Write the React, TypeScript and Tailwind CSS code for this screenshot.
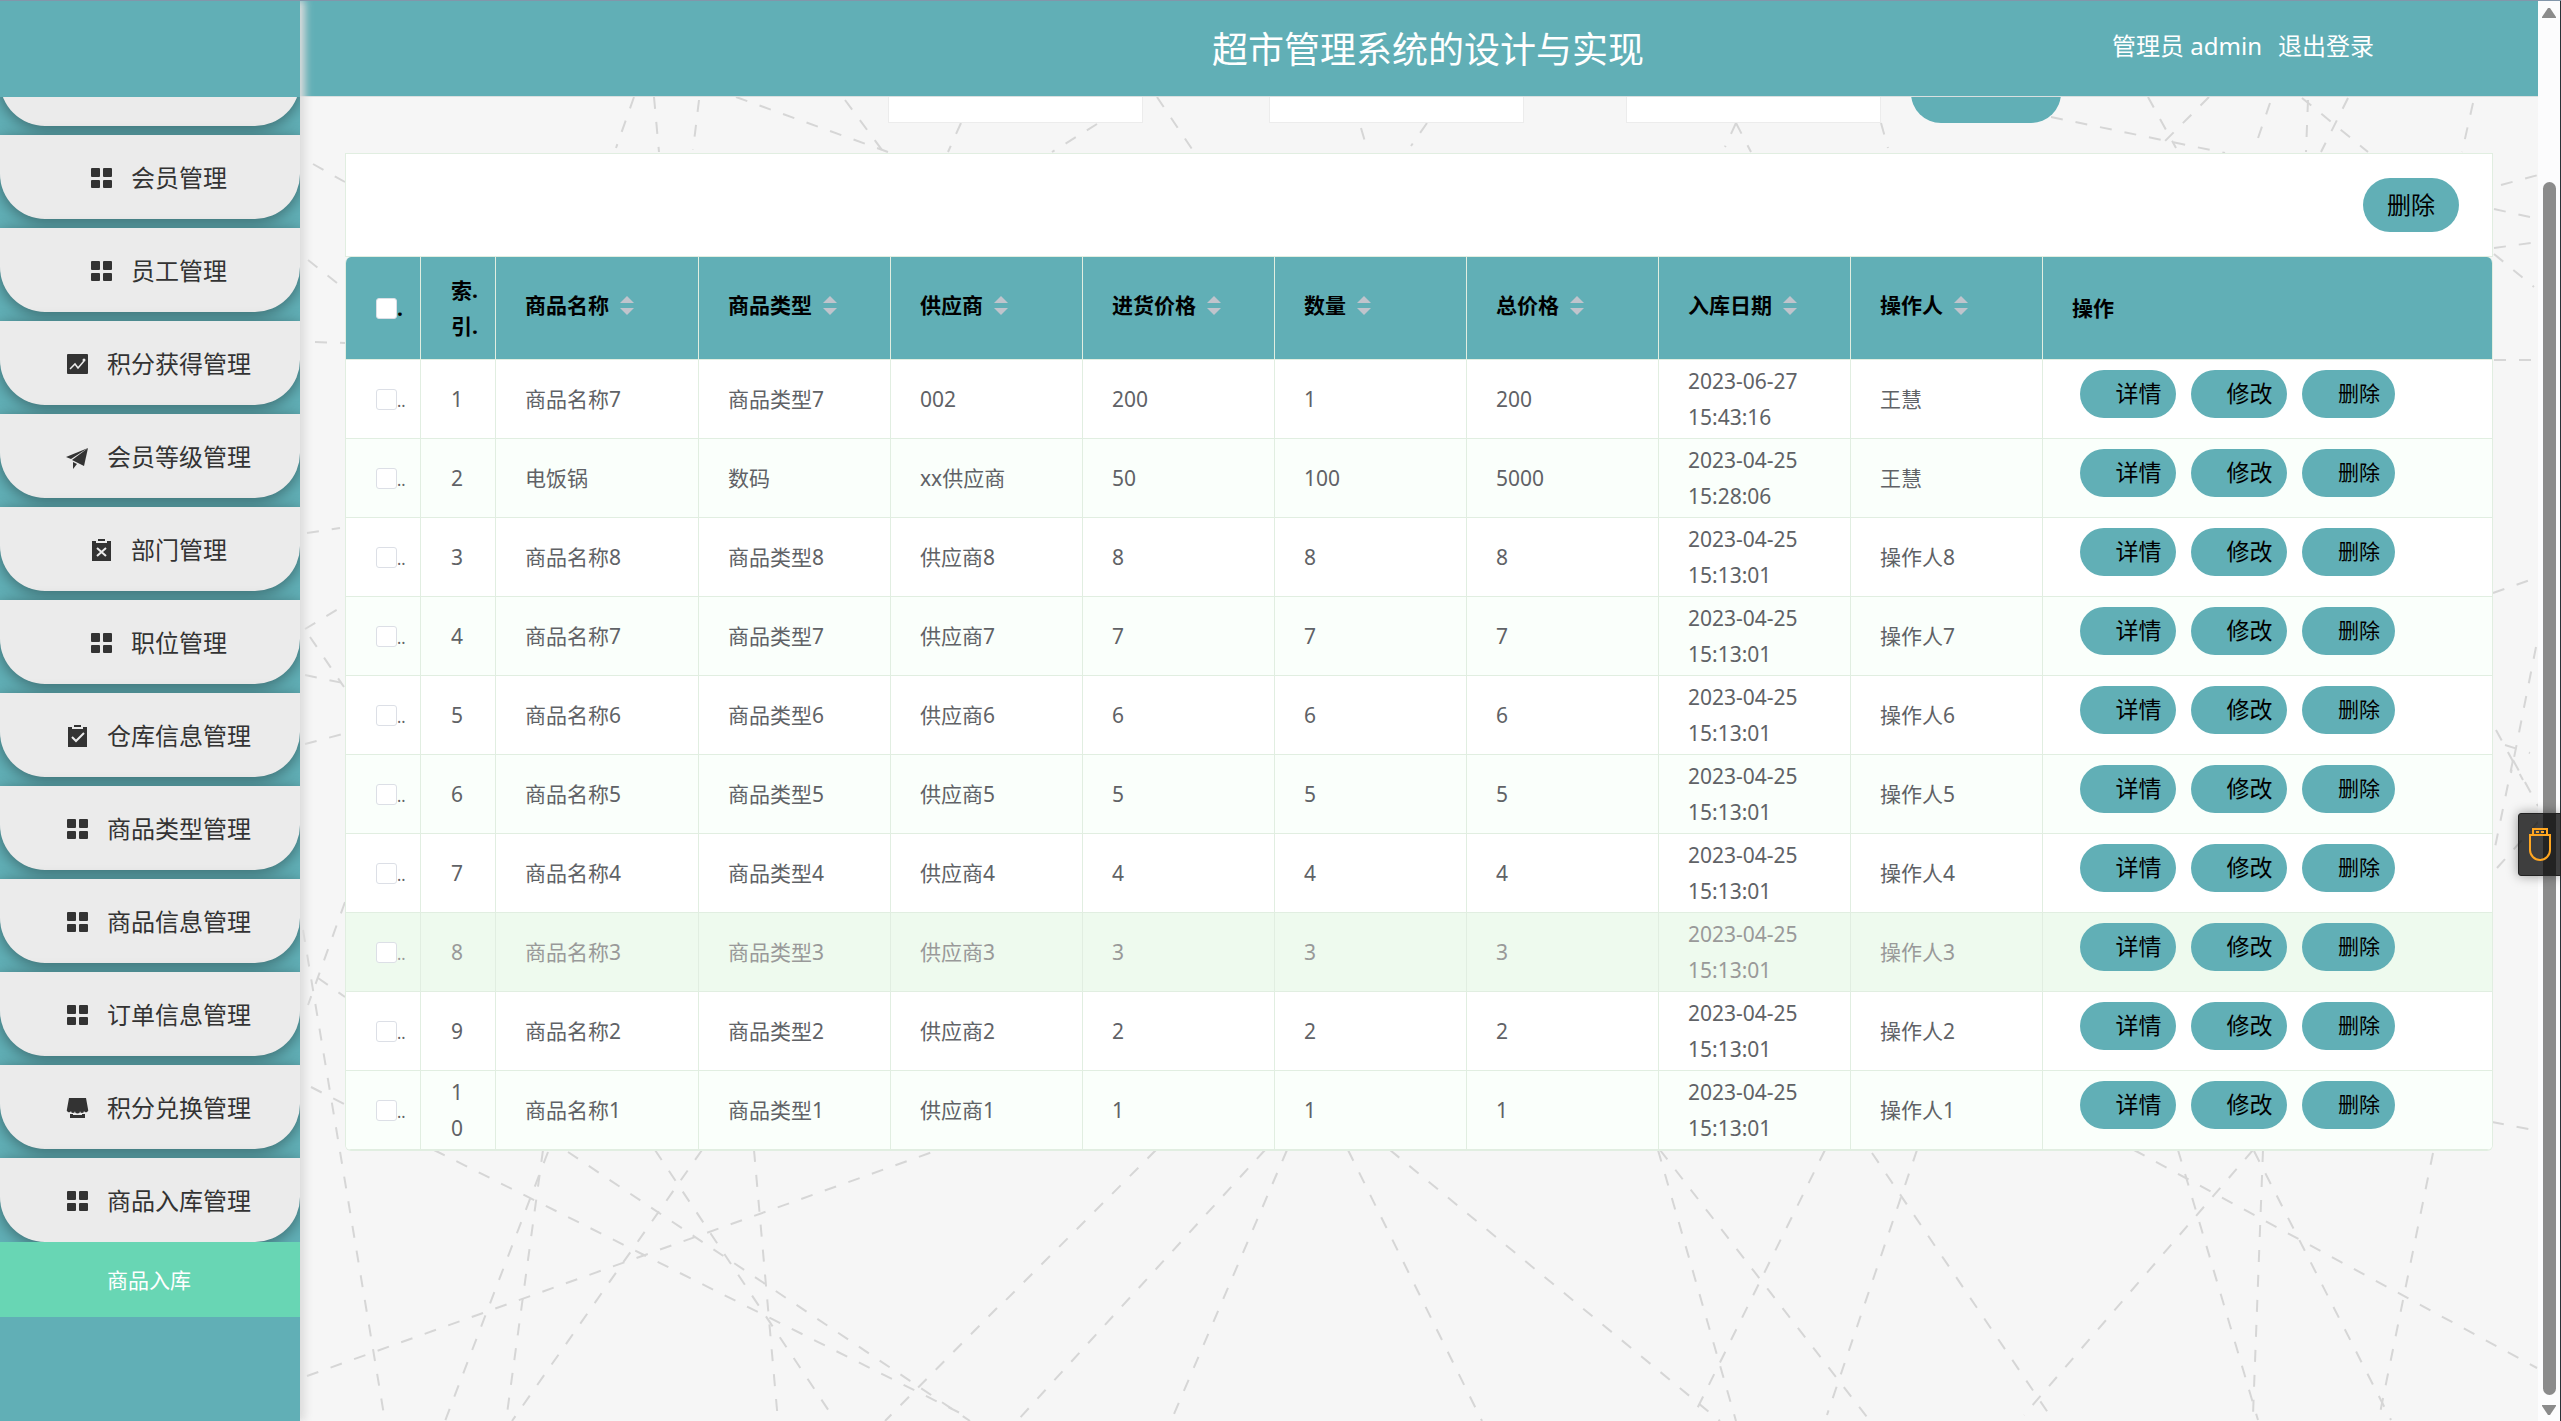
import type { ReactNode } from 'react'

const MENU = [
  { label: '会员管理', icon: 'grid' },
  { label: '员工管理', icon: 'grid' },
  { label: '积分获得管理', icon: 'chart' },
  { label: '会员等级管理', icon: 'plane' },
  { label: '部门管理', icon: 'release' },
  { label: '职位管理', icon: 'grid' },
  { label: '仓库信息管理', icon: 'claim' },
  { label: '商品类型管理', icon: 'grid' },
  { label: '商品信息管理', icon: 'grid' },
  { label: '订单信息管理', icon: 'grid' },
  { label: '积分兑换管理', icon: 'shop' },
  { label: '商品入库管理', icon: 'grid' },
]

const COLUMNS = ['商品名称', '商品类型', '供应商', '进货价格', '数量', '总价格', '入库日期', '操作人']

const ROWS = [
  ['商品名称7', '商品类型7', '002', '200', '1', '200', '2023-06-27 15:43:16', '王慧'],
  ['电饭锅', '数码', 'xx供应商', '50', '100', '5000', '2023-04-25 15:28:06', '王慧'],
  ['商品名称8', '商品类型8', '供应商8', '8', '8', '8', '2023-04-25 15:13:01', '操作人8'],
  ['商品名称7', '商品类型7', '供应商7', '7', '7', '7', '2023-04-25 15:13:01', '操作人7'],
  ['商品名称6', '商品类型6', '供应商6', '6', '6', '6', '2023-04-25 15:13:01', '操作人6'],
  ['商品名称5', '商品类型5', '供应商5', '5', '5', '5', '2023-04-25 15:13:01', '操作人5'],
  ['商品名称4', '商品类型4', '供应商4', '4', '4', '4', '2023-04-25 15:13:01', '操作人4'],
  ['商品名称3', '商品类型3', '供应商3', '3', '3', '3', '2023-04-25 15:13:01', '操作人3'],
  ['商品名称2', '商品类型2', '供应商2', '2', '2', '2', '2023-04-25 15:13:01', '操作人2'],
  ['商品名称1', '商品类型1', '供应商1', '1', '1', '1', '2023-04-25 15:13:01', '操作人1'],
]

const ACTIVE_ROW = 7

// x1, y1, x2, y2 of every dashed line in the backdrop
const LINES = [
  [634, 97, 616, 148], [654, 97, 659, 152], [699, 100, 693, 150], [736, 97, 888, 152],
  [845, 100, 882, 150], [961, 123, 948, 152], [1097, 124, 1052, 152], [1157, 97, 1192, 149],
  [1361, 128, 1368, 152], [1427, 123, 1411, 146], [1736, 123, 1725, 147], [1736, 123, 1751, 152],
  [1881, 123, 1888, 148], [2051, 117, 2225, 153], [2148, 97, 2176, 148], [2209, 97, 2158, 148],
  [2270, 103, 2255, 147], [2302, 98, 2368, 152], [2308, 100, 2306, 152], [2348, 98, 2321, 152],
  [2473, 103, 2462, 152], [2501, 185, 2538, 175], [2494, 209, 2530, 217], [2494, 248, 2538, 242],
  [2494, 254, 2534, 287], [2494, 360, 2538, 360], [2493, 593, 2530, 580], [2536, 647, 2511, 773],
  [2496, 730, 2523, 780], [2505, 745, 2530, 753], [2513, 760, 2493, 857], [2513, 760, 2538, 806],
  [2497, 868, 2538, 822], [2492, 1122, 2534, 1130],
  [313, 164, 345, 182], [308, 260, 342, 287], [315, 342, 345, 343], [307, 533, 340, 528],
  [305, 629, 343, 606], [310, 637, 344, 687], [305, 675, 343, 683], [305, 744, 343, 734],
  [345, 902, 308, 1005], [318, 978, 345, 997], [311, 1087, 346, 1105],
  [303, 930, 385, 1421], [434, 1150, 970, 1418], [307, 1376, 938, 1150], [548, 1152, 445, 1421],
  [543, 1150, 506, 1421], [702, 1150, 512, 1421], [568, 1152, 970, 1421], [655, 1150, 833, 1417],
  [754, 1150, 778, 1421], [1156, 1150, 1004, 1302], [997, 1308, 885, 1421], [1265, 1150, 1017, 1421],
  [1287, 1150, 1171, 1421], [1348, 1150, 1482, 1421], [1390, 1150, 1720, 1421], [1658, 1150, 1736, 1421],
  [1660, 1150, 1867, 1417], [1825, 1150, 1694, 1415], [1917, 1150, 1827, 1415], [1872, 1153, 2053, 1420],
  [2134, 1150, 2537, 1368], [2178, 1150, 2258, 1420], [2253, 1150, 2024, 1415], [2254, 1151, 2391, 1420],
  [2263, 1150, 2253, 1415], [2433, 1153, 2380, 1413],
]

const ICONS: Record<string, ReactNode> = {
  grid: (
    <>
      <rect x="2" y="2" width="9" height="9" rx="1" />
      <rect x="14" y="2" width="9" height="9" rx="1" />
      <rect x="2" y="14" width="9" height="8" rx="1" />
      <rect x="14" y="14" width="9" height="8" rx="1" />
    </>
  ),
  chart: (
    <>
      <rect x="2" y="2" width="21" height="20" rx="1" />
      <path d="M5 17l5-5 3 4 6-7" fill="none" stroke="#ebebeb" strokeWidth="1.5" />
      <circle cx="19" cy="8" r="1.5" fill="#ebebeb" />
    </>
  ),
  plane: (
    <>
      <path d="M1 12L23 3 6 14z" />
      <path d="M23 3L7 15l12 6z" />
      <path d="M8 17l4 2-4 5z" />
    </>
  ),
  release: (
    <>
      <path d="M3 3h4v2h11V3h4v20H3z" />
      <path d="M9 1h7v2H9z" />
      <path d="M8 10l9 8M17 10l-9 8" fill="none" stroke="#ebebeb" strokeWidth="2" />
    </>
  ),
  claim: (
    <>
      <path d="M3 3h4v2h11V3h4v20H3z" />
      <path d="M9 1h7v2H9z" />
      <path d="M7 13l4 4 8-8" fill="none" stroke="#ebebeb" strokeWidth="2" />
    </>
  ),
  shop: (
    <>
      <path d="M4 2h17l2 11a2 2 0 0 1-4 2 2 2 0 0 1-4 0 2 2 0 0 1-5 0 2 2 0 0 1-4 0 2 2 0 0 1-4-2z" />
      <path d="M5 18h3v1h9v-1h3v4H5z" />
    </>
  ),
}

function MenuButton({ label, icon }: { label: string; icon: string }) {
  return (
    <button
      type="button"
      className="flex h-[84px] w-full shrink-0 items-center justify-center rounded-b-[45px] bg-[#ebebeb] pt-0.5 pr-0.5 text-2xl text-[#333] shadow-[0_3px_15px_rgba(0,0,0,0.4)]"
    >
      <span className="flex w-[60px] justify-center">
        <svg className="size-[25px]" viewBox="0 0 25 25" fill="currentColor">{ICONS[icon]}</svg>
      </span>
      {label}
    </button>
  )
}

function Sidebar() {
  return (
    <aside className="z-20 flex w-[300px] shrink-0 flex-col bg-[#61afb6] shadow-[5px_0_8px_#dcdcdc]">
      <nav className="mt-[97px] overflow-hidden">
        <ul className="flex flex-col gap-[9px]">
          {/* scrolled almost out of view */}
          <li className="flex h-[29px] items-end">
            <button
              type="button"
              aria-label="首页"
              className="h-[84px] w-full shrink-0 rounded-b-[45px] bg-[#ebebeb] shadow-[0_3px_15px_rgba(0,0,0,0.4)]"
            />
          </li>
          {MENU.map(item => (
            <li key={item.label}>
              <MenuButton label={item.label} icon={item.icon} />
            </li>
          ))}
        </ul>
        <a href="#stock" className="relative flex h-[75px] items-center bg-[#68d6b4] pt-0.5 pl-[107px] text-[21px] text-white">
          商品入库
        </a>
      </nav>
    </aside>
  )
}

function Header() {
  return (
    <header className="grid h-[97px] grid-cols-[1fr_auto_1fr] items-center border-b border-[#d9e0e0] bg-[#61afb6] pt-1 text-white">
      <span />
      <h1 className="pl-[18px] text-4xl">超市管理系统的设计与实现</h1>
      <div className="flex justify-end gap-4 pr-[164px] pb-2 text-2xl">
        <span>管理员 admin</span>
        <a href="#logout">退出登录</a>
      </div>
    </header>
  )
}

function SearchForm() {
  return (
    <form className="flex h-[26px] items-end overflow-hidden pl-[588px]">
      <input aria-label="商品名称" className="mr-[126px] h-[54px] w-[255px] shrink-0 border border-[#ececec] bg-white" />
      <input aria-label="商品类型" className="mr-[102px] h-[54px] w-[255px] shrink-0 border border-[#ececec] bg-white" />
      <input aria-label="供应商" className="mr-[30px] h-[54px] w-[255px] shrink-0 border border-[#ececec] bg-white" />
      <button type="button" aria-label="查询" className="h-[60px] w-[150px] shrink-0 rounded-[30px] bg-[#61afb6]" />
    </form>
  )
}

function SortCarets() {
  return (
    <svg className="ml-[11px] h-[19px] w-[14px]" viewBox="0 0 14 19" fill="#c0c4cc">
      <path d="M7 0l7 7H0z" />
      <path d="M0 12h14l-7 7z" />
    </svg>
  )
}

function Tick({ label, dots }: { label: string; dots: string }) {
  return (
    <div className="flex items-center">
      <input
        type="checkbox"
        aria-label={label}
        className="size-[21px] shrink-0 appearance-none rounded-[3px] border border-[#dcdfe6] bg-white"
      />
      <span className={dots === '.' ? '' : 'pt-1 text-base'}>{dots}</span>
    </div>
  )
}

function StockTable() {
  return (
    <div className="overflow-hidden rounded-[6px] border-x border-b border-[#e1eee1] bg-white">
      <table className="w-full table-fixed border-separate border-spacing-0 text-left text-[21px] leading-9">
        <colgroup>
          <col className="w-[75px]" />
          <col className="w-[75px]" />
          <col className="w-[203px]" />
          {COLUMNS.slice(1).map(name => <col key={name} className="w-[192px]" />)}
          <col />
        </colgroup>
        <thead className="bg-[#61afb6] text-black">
          <tr className="h-[103px]">
            <th className="border-r border-b border-[#e1eee1] pl-[30px]"><Tick label="全选" dots="." /></th>
            <th className="border-r border-b border-[#e1eee1] pl-[30px]">索.<br />引.</th>
            {COLUMNS.map(name => (
              <th key={name} className="border-r border-b border-[#e1eee1] pl-[29px]">
                <div className="flex items-center pb-1.5">
                  {name}
                  <SortCarets />
                </div>
              </th>
            ))}
            <th className="border-b border-[#e1eee1] pl-[29px]">操作</th>
          </tr>
        </thead>
        <tbody>
          {ROWS.map((row, i) => (
            <tr
              key={i}
              className={
                i === ACTIVE_ROW
                  ? 'h-[79px] bg-[#eefaee] text-[#999]'
                  : i % 2 ? 'h-[79px] bg-[#fafffb] text-[#606266]' : 'h-[79px] bg-white text-[#606266]'
              }
            >
              <td className="border-r border-b border-[#e1eee1] pl-[30px]">
                <Tick label={`选择第${i + 1}行`} dots=".." />
              </td>
              <td className="border-r border-b border-[#e1eee1] py-[3px] pr-8 pl-[30px] break-all">{i + 1}</td>
              {row.map((cell, j) => (
                <td key={j} className="border-r border-b border-[#e1eee1] py-[3px] pr-[30px] pl-[29px]">{cell}</td>
              ))}
              <td className="border-b border-[#e1eee1] pb-[10px] pl-[37px]">
                <div className="flex gap-[15px] text-black">
                  <button type="button" className="h-12 w-24 rounded-full bg-[#61afb6] pb-0.5 pl-[21px] text-[23px]">详情</button>
                  <button type="button" className="h-12 w-24 rounded-full bg-[#61afb6] pb-0.5 pl-[21px] text-[23px]">修改</button>
                  <button type="button" className="h-12 w-[93px] rounded-full bg-[#61afb6] pb-0.5 pl-[21px]">删除</button>
                </div>
              </td>
            </tr>
          ))}
        </tbody>
      </table>
    </div>
  )
}

function Scrollbar() {
  return (
    <div className="z-10 flex w-[23px] shrink-0 flex-col items-center border-r border-[#2a3338] bg-[#fcfcfd] pt-2 pb-[6px]">
      <svg className="h-[10px] w-[14px]" viewBox="0 0 14 10" fill="#8b8b8b"><path d="M6 0h2l6 9v1H0V9z" /></svg>
      <div className="mt-[164px] mb-[10px] w-[13px] flex-1 rounded-full bg-[#8b8b8b]" />
      <svg className="h-[10px] w-[14px]" viewBox="0 0 14 10" fill="#8b8b8b"><path d="M0 0h14v1L8 10H6L0 1z" /></svg>
    </div>
  )
}

export default function App() {
  return (
    <div className="relative flex min-h-screen overflow-hidden bg-[#f6f6f6] font-['Noto_Sans','Noto_Sans_CJK_SC',sans-serif]">
      <svg
        className="absolute inset-0 h-full w-full"
        viewBox="0 0 2561 1421"
        preserveAspectRatio="xMinYMin slice"
        stroke="#d6d6d6"
        strokeWidth="2"
        strokeDasharray="12 13"
      >
        {LINES.map(([x1, y1, x2, y2], i) => <line key={i} x1={x1} y1={y1} x2={x2} y2={y2} />)}
      </svg>
      <div className="absolute inset-x-0 top-0 z-30 h-px bg-[#8296aa]" />

      <Sidebar />

      <div className="relative min-w-0 flex-1">
        <Header />
        <SearchForm />
        <main className="pt-[30px] pr-[45px] pl-[45px]">
          <div className="flex h-[104px] items-center justify-end border border-[#e1eee1] bg-white pr-[33px]">
            <button type="button" className="h-[54px] w-24 rounded-full bg-[#61afb6] text-2xl text-black">删除</button>
          </div>
          <StockTable />
        </main>
      </div>

      <Scrollbar />

      {/* usb helper docked at the window edge */}
      <button
        type="button"
        aria-label="USB"
        className="absolute top-[813px] right-0 z-20 flex h-[63px] w-[43px] items-center justify-center rounded-l-[3px] border border-[#222] bg-black/75 shadow-[0_0_12px_rgba(0,0,0,0.4)]"
      >
        <svg className="h-[34px] w-[22px]" viewBox="0 0 22 34" fill="none" stroke="#ffa621" strokeWidth="2">
          <path d="M4 7V1h14v6M1 7h20v15a10 10 0 0 1-20 0z" />
          <path d="M7 4h3M12 4h3" />
        </svg>
      </button>
    </div>
  )
}
